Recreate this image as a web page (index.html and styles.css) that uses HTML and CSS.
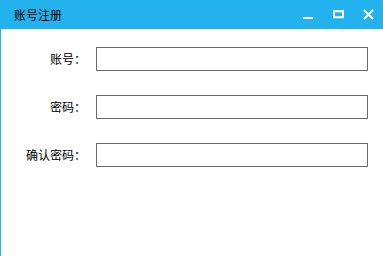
FILE: index.html
```html
<!DOCTYPE html>
<html lang="zh">
<head>
<meta charset="utf-8">
<link rel="stylesheet" href="styles.css">
</head>
<body>
<div class="window">
  <div class="titlebar">
    <span class="title">账号注册</span>
    <div class="controls">
      <span class="btn"><svg width="10" height="10" viewBox="0 0 10 10"><rect x="0" y="7" width="10" height="2" fill="#fff"/></svg></span>
      <span class="btn"><svg width="11" height="9" viewBox="0 0 11 9"><rect x="1" y="1.25" width="9" height="6" fill="none" stroke="#fff" stroke-width="2"/><rect x="0" y="0" width="11" height="1.5" fill="#fff"/></svg></span>
      <span class="btn"><svg width="11" height="11" viewBox="0 0 11 11"><path d="M1 1 L10 10 M10 1 L1 10" stroke="#fff" stroke-width="2"/></svg></span>
    </div>
  </div>
  <div class="form">
    <label class="label">账号：</label><div class="input"></div>
    <label class="label">密码：</label><div class="input"></div>
    <label class="label">确认密码：</label><div class="input"></div>
  </div>
</div>
</body>
</html>
```
FILE: styles.css
```css
html, body {
  margin: 0;
  padding: 0;
  background: #fff;
}
.window {
  width: 383px;
  height: 256px;
  box-sizing: border-box;
  border-left: 1px solid #22b3ee;
  font-family: "Noto Sans CJK SC", "Liberation Sans", sans-serif;
  font-size: 12px;
  color: #000;
}
.titlebar {
  height: 29px;
  margin-left: -1px;
  background: #22b3ee;
  display: flex;
  align-items: center;
  justify-content: space-between;
  padding-left: 14px;
}
.title {
  line-height: 12px;
  margin-top: 1px;
}
.controls {
  display: flex;
  height: 29px;
}
.btn {
  width: 30px;
  height: 29px;
  display: flex;
  align-items: center;
  justify-content: center;
}
.btn svg {
  display: block;
}
.form {
  display: grid;
  grid-template-columns: 85px 272px;
  column-gap: 10px;
  row-gap: 24px;
  padding-top: 18px;
  align-items: center;
}
.label {
  text-align: right;
  line-height: 24px;
  letter-spacing: 0;
}
.input {
  height: 24px;
  box-sizing: border-box;
  border: 1px solid #6a6a6a;
  background: #fff;
}
```
